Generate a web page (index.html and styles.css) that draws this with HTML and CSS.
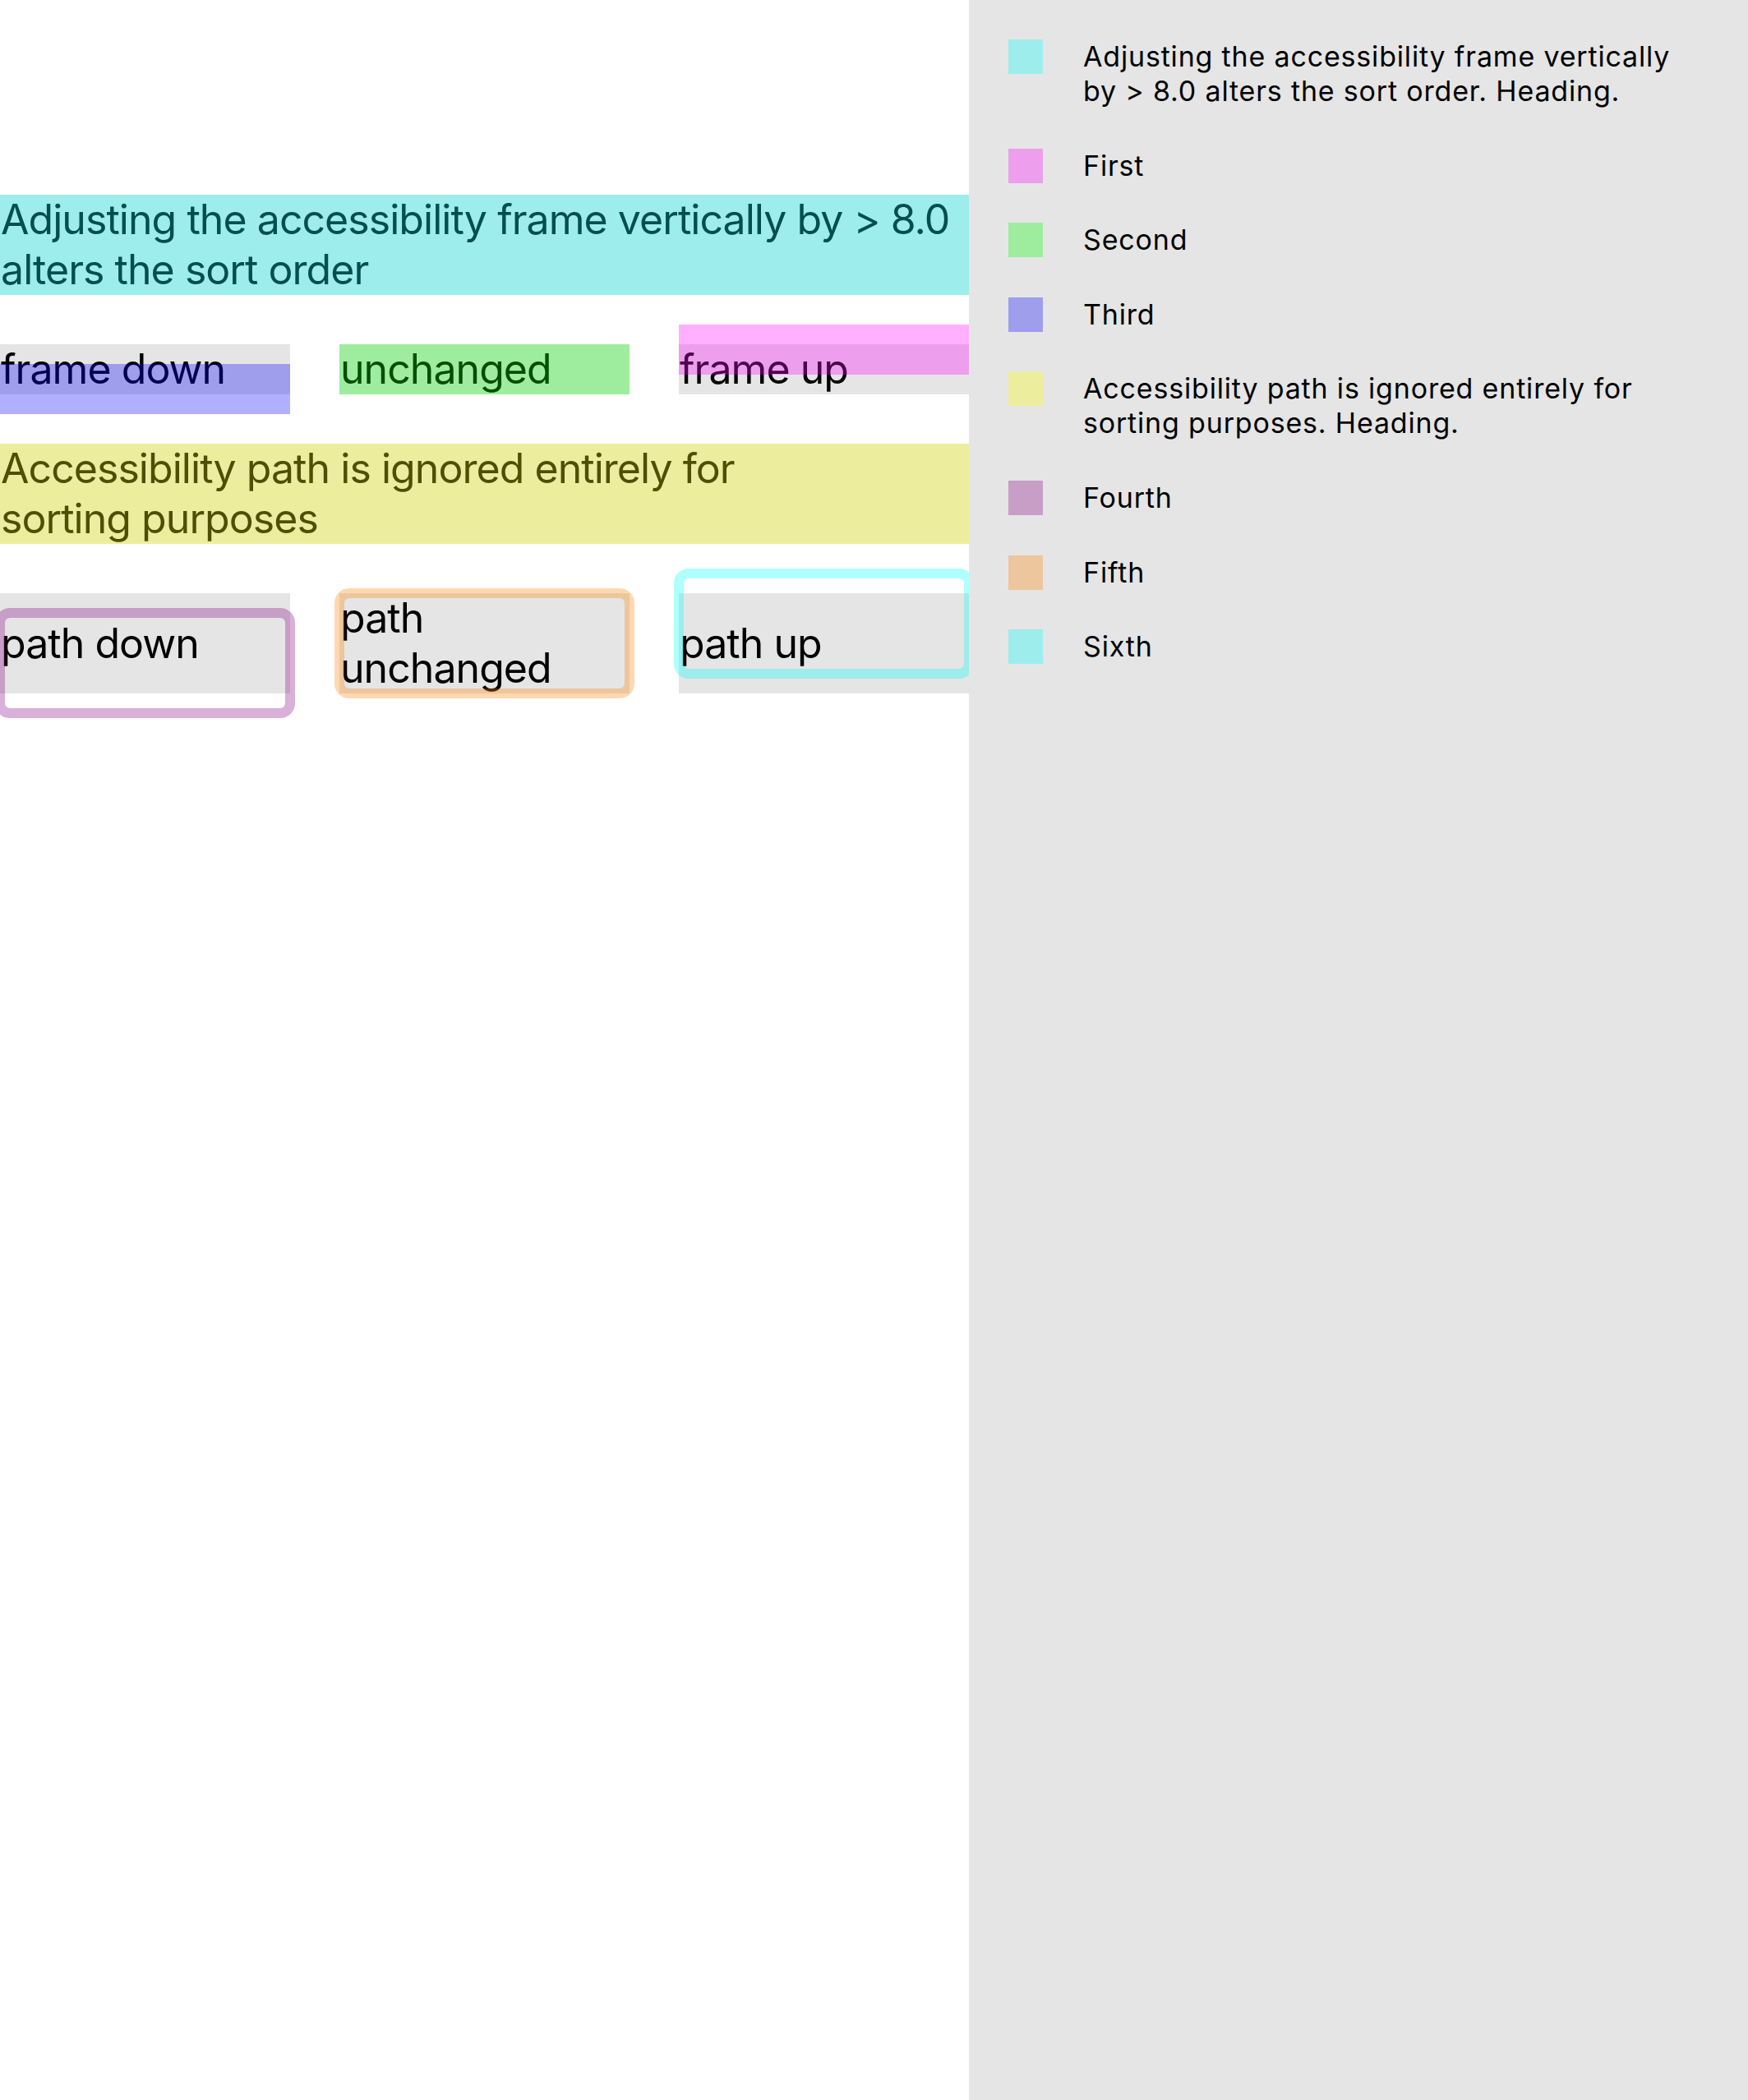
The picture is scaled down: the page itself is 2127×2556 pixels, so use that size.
FILE: index.html
```html
<!DOCTYPE html>
<html lang="en">
<head>
<meta charset="utf-8">
<title>Accessibility sort order</title>
<link rel="stylesheet" href="styles.css">
</head>
<body>
<div class="app">
  <main class="canvas">
    <div class="block heading">
      <span class="label">Adjusting the accessibility frame vertically by &gt; 8.0<br>alters the sort order</span>
      <div class="hl fill cyan"></div>
    </div>

    <div class="row">
      <div class="cell">
        <span class="label">frame down</span>
        <div class="hl fill blue down"></div>
      </div>
      <div class="cell">
        <span class="label">unchanged</span>
        <div class="hl fill green"></div>
      </div>
      <div class="cell">
        <span class="label">frame up</span>
        <div class="hl fill magenta up"></div>
      </div>
    </div>

    <div class="block heading">
      <span class="label">Accessibility path is ignored entirely for<br>sorting purposes</span>
      <div class="hl fill yellow"></div>
    </div>

    <div class="row row-path">
      <div class="cell">
        <span class="label">path down</span>
        <div class="hl ring purple down"></div>
      </div>
      <div class="cell">
        <span class="label">path<br>unchanged</span>
        <div class="hl ring orange"></div>
      </div>
      <div class="cell">
        <span class="label">path up</span>
        <div class="hl ring cyan up"></div>
      </div>
    </div>
  </main>

  <aside class="legend">
    <div class="item"><span class="swatch cyan"></span><span class="text">Adjusting the accessibility frame vertically<br>by &gt; 8.0 alters the sort order. Heading.</span></div>
    <div class="item"><span class="swatch magenta"></span><span class="text">First</span></div>
    <div class="item"><span class="swatch green"></span><span class="text">Second</span></div>
    <div class="item"><span class="swatch blue"></span><span class="text">Third</span></div>
    <div class="item"><span class="swatch yellow"></span><span class="text">Accessibility path is ignored entirely for<br>sorting purposes. Heading.</span></div>
    <div class="item"><span class="swatch purple"></span><span class="text">Fourth</span></div>
    <div class="item"><span class="swatch orange"></span><span class="text">Fifth</span></div>
    <div class="item"><span class="swatch cyan"></span><span class="text">Sixth</span></div>
  </aside>
</div>
</body>
</html>
```

FILE: styles.css
```css
* { box-sizing: border-box; }

html, body {
  margin: 0;
  padding: 0;
  background: #ffffff;
}

body {
  font-family: Inter, "Noto Sans", "Liberation Sans", sans-serif;
  color: #000;
}

.app {
  display: flex;
  min-height: 100vh;
}

.canvas {
  width: 1179px;
  flex: 0 0 1179px;
  background: #ffffff;
  padding-top: 237px;
  display: flex;
  flex-direction: column;
  gap: 60px;
  overflow: hidden;
}

.block,
.cell {
  position: relative;
  background: #e5e5e5;
}

.label {
  display: block;
  font-size: 50px;
  line-height: 61px;
  letter-spacing: -0.95px;
  padding-left: 1px;
}

.row {
  display: grid;
  grid-template-columns: repeat(3, 1fr);
  column-gap: 60px;
}

.row-path .cell {
  display: flex;
  align-items: center;
}

/* highlight overlays */
.hl {
  position: absolute;
  pointer-events: none;
}

.fill {
  inset: 0;
}

.ring {
  inset: -6px;
  border: 12px solid;
  border-radius: 18px;
}

.down { transform: translateY(24px); }
.up { transform: translateY(-24px); }

.fill.cyan { background: rgba(0, 255, 255, 0.31); }
.fill.blue { background: rgba(0, 0, 255, 0.31); }
.fill.green { background: rgba(0, 255, 0, 0.31); }
.fill.magenta { background: rgba(255, 0, 255, 0.31); }
.fill.yellow { background: rgba(255, 255, 0, 0.31); }

.ring.purple { border-color: rgba(128, 0, 128, 0.31); }
.ring.orange { border-color: rgba(255, 128, 0, 0.31); }
.ring.cyan { border-color: rgba(0, 255, 255, 0.31); }

/* legend */
.legend {
  flex: 1 1 auto;
  background: #e5e5e5;
  padding: 48px 40px 0 48px;
  display: flex;
  flex-direction: column;
  gap: 48.6px;
}

.item {
  display: flex;
  align-items: flex-start;
  gap: 49px;
}

.swatch {
  flex: 0 0 42px;
  width: 42px;
  height: 42px;
}

.swatch.cyan { background: rgba(0, 255, 255, 0.31); }
.swatch.magenta { background: rgba(255, 0, 255, 0.31); }
.swatch.green { background: rgba(0, 255, 0, 0.31); }
.swatch.blue { background: rgba(0, 0, 255, 0.31); }
.swatch.yellow { background: rgba(255, 255, 0, 0.31); }
.swatch.purple { background: rgba(128, 0, 128, 0.31); }
.swatch.orange { background: rgba(255, 128, 0, 0.31); }

.text {
  font-size: 34px;
  line-height: 42px;
  letter-spacing: 0.82px;
  white-space: nowrap;
}
```
